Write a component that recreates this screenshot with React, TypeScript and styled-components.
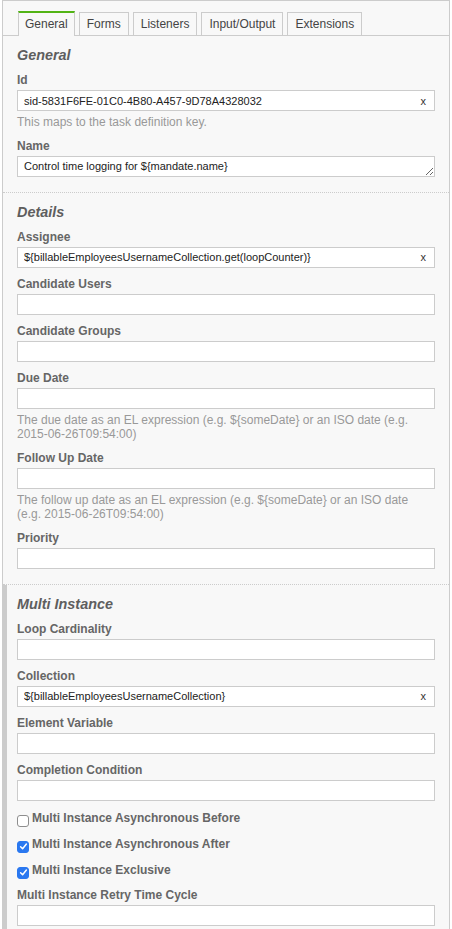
import React from "react";
import styled, { createGlobalStyle, css } from "styled-components";

const GlobalStyle = createGlobalStyle`
  html, body {
    margin: 0;
    padding: 0;
    background: #ffffff;
  }
  body {
    font-family: "Liberation Sans", Arial, Helvetica, sans-serif;
  }
  * { box-sizing: border-box; }
`;

const Panel = styled.div`
  margin-left: 2px;
  width: 448px;
  border: 1px solid #cccccc;
  border-bottom: none;
  background: #f8f8f8;
  color: #333;
  font-size: 12px;
`;

const TabBar = styled.div`
  display: flex;
  align-items: flex-end;
  gap: 4px;
  height: 35px;
  padding-left: 15px;
  border-bottom: 1px solid #cccccc;
`;

const Tab = styled.div<{ $active?: boolean }>`
  height: 23px;
  padding: 0 7px;
  border: 1px solid #cccccc;
  border-bottom: none;
  background: #f8f8f8;
  color: #444;
  font-size: 12px;
  line-height: 22px;
  white-space: nowrap;
  ${(p) =>
    p.$active &&
    css`
      height: 25px;
      padding: 0 6px;
      border-top: 2px solid #52b415;
      margin-bottom: -1px;
      line-height: 22px;
    `}
`;

const Group = styled.section<{ $hover?: boolean }>`
  padding: 6px 14px 6px 14px;
  border-bottom: 1px dotted #cccccc;
  ${(p) =>
    p.$hover &&
    css`
      box-shadow: inset 4px 0 0 #cccccc;
    `}
`;

const GroupLabel = styled.h2`
  margin: 5px 0 9px;
  font-size: 14.4px;
  line-height: 17px;
  font-weight: bold;
  font-style: italic;
  color: #5e5e5e;
`;

const Entry = styled.div`
  margin-bottom: 9px;
`;

const Label = styled.label`
  display: block;
  margin-bottom: 3px;
  font-size: 12px;
  line-height: 14px;
  font-weight: bold;
  color: #666;
`;

const FieldWrapper = styled.div`
  position: relative;
`;

const TextInput = styled.input`
  display: block;
  width: 100%;
  height: 21px;
  margin: 0;
  padding: 0 24px 0 6px;
  border: 1px solid #cccccc;
  border-radius: 0;
  background: #ffffff;
  font-family: "Liberation Sans", Arial, Helvetica, sans-serif;
  font-size: 11px;
  color: #222;
  outline: none;
`;

const TextArea = styled.textarea`
  display: block;
  width: 100%;
  height: 21px;
  margin: 0;
  padding: 3px 6px;
  border: 1px solid #cccccc;
  border-radius: 0;
  background: #ffffff;
  font-family: "Liberation Sans", Arial, Helvetica, sans-serif;
  font-size: 11px;
  line-height: 13px;
  color: #222;
  resize: vertical;
  overflow: hidden;
  outline: none;
`;

const ClearButton = styled.button`
  position: absolute;
  right: 9px;
  top: 50%;
  transform: translateY(-50%);
  padding: 0;
  border: none;
  background: none;
  font-family: "Liberation Sans", Arial, Helvetica, sans-serif;
  font-size: 11px;
  line-height: 11px;
  color: #333;
  cursor: pointer;
`;

const Description = styled.div`
  margin-top: 4px;
  font-size: 12px;
  line-height: 14.5px;
  color: #999;
`;

const CheckRow = styled.div`
  display: flex;
  align-items: flex-start;
  height: 17px;
  margin-bottom: 9px;
`;

const CheckBox = styled.span<{ $checked?: boolean }>`
  flex: none;
  display: flex;
  align-items: center;
  justify-content: center;
  width: 12px;
  height: 12px;
  margin: 5px 3px 0 0;
  border-radius: 3px;
  border: 1px solid ${(p) => (p.$checked ? "#2a78f0" : "#8e8e8e")};
  background: ${(p) => (p.$checked ? "#2a78f0" : "#ffffff")};
`;

const CheckLabel = styled.span`
  padding-top: 1px;
  font-size: 12px;
  line-height: 14px;
  font-weight: bold;
  color: #666;
`;

type FieldProps = {
  label: string;
  value?: string;
  description?: string;
};

const Field = ({ label, value, description }: FieldProps) => (
  <Entry>
    <Label>{label}</Label>
    <FieldWrapper>
      <TextInput defaultValue={value ?? ""} />
      {value ? <ClearButton>x</ClearButton> : null}
    </FieldWrapper>
    {description ? <Description>{description}</Description> : null}
  </Entry>
);

const AreaField = ({ label, value }: FieldProps) => (
  <Entry>
    <Label>{label}</Label>
    <TextArea rows={1} defaultValue={value ?? ""} />
  </Entry>
);

const Check = ({ label, checked }: { label: string; checked?: boolean }) => (
  <CheckRow role="checkbox" aria-checked={!!checked}>
    <CheckBox $checked={checked}>
      {checked ? (
        <svg width="9" height="9" viewBox="0 0 9 9" fill="none">
          <path
            d="M1.6 4.8 L3.6 6.8 L7.4 2"
            stroke="#ffffff"
            strokeWidth="1.5"
            strokeLinecap="round"
            strokeLinejoin="round"
          />
        </svg>
      ) : null}
    </CheckBox>
    <CheckLabel>{label}</CheckLabel>
  </CheckRow>
);

const tabs = ["General", "Forms", "Listeners", "Input/Output", "Extensions"];

export default function App() {
  return (
    <>
      <GlobalStyle />
      <Panel>
        <TabBar>
          {tabs.map((t, i) => (
            <Tab key={t} $active={i === 0}>
              {t}
            </Tab>
          ))}
        </TabBar>

        <Group>
          <GroupLabel>General</GroupLabel>
          <Field
            label="Id"
            value="sid-5831F6FE-01C0-4B80-A457-9D78A4328032"
            description="This maps to the task definition key."
          />
          <AreaField label="Name" value="Control time logging for ${mandate.name}" />
        </Group>

        <Group>
          <GroupLabel>Details</GroupLabel>
          <Field
            label="Assignee"
            value="${billableEmployeesUsernameCollection.get(loopCounter)}"
          />
          <Field label="Candidate Users" />
          <Field label="Candidate Groups" />
          <Field
            label="Due Date"
            description="The due date as an EL expression (e.g. ${someDate} or an ISO date (e.g. 2015-06-26T09:54:00)"
          />
          <Field
            label="Follow Up Date"
            description="The follow up date as an EL expression (e.g. ${someDate} or an ISO date (e.g. 2015-06-26T09:54:00)"
          />
          <Field label="Priority" />
        </Group>

        <Group $hover>
          <GroupLabel>Multi Instance</GroupLabel>
          <Field label="Loop Cardinality" />
          <Field label="Collection" value="${billableEmployeesUsernameCollection}" />
          <Field label="Element Variable" />
          <Field label="Completion Condition" />
          <Check label="Multi Instance Asynchronous Before" />
          <Check label="Multi Instance Asynchronous After" checked />
          <Check label="Multi Instance Exclusive" checked />
          <Field label="Multi Instance Retry Time Cycle" />
        </Group>
      </Panel>
    </>
  );
}
